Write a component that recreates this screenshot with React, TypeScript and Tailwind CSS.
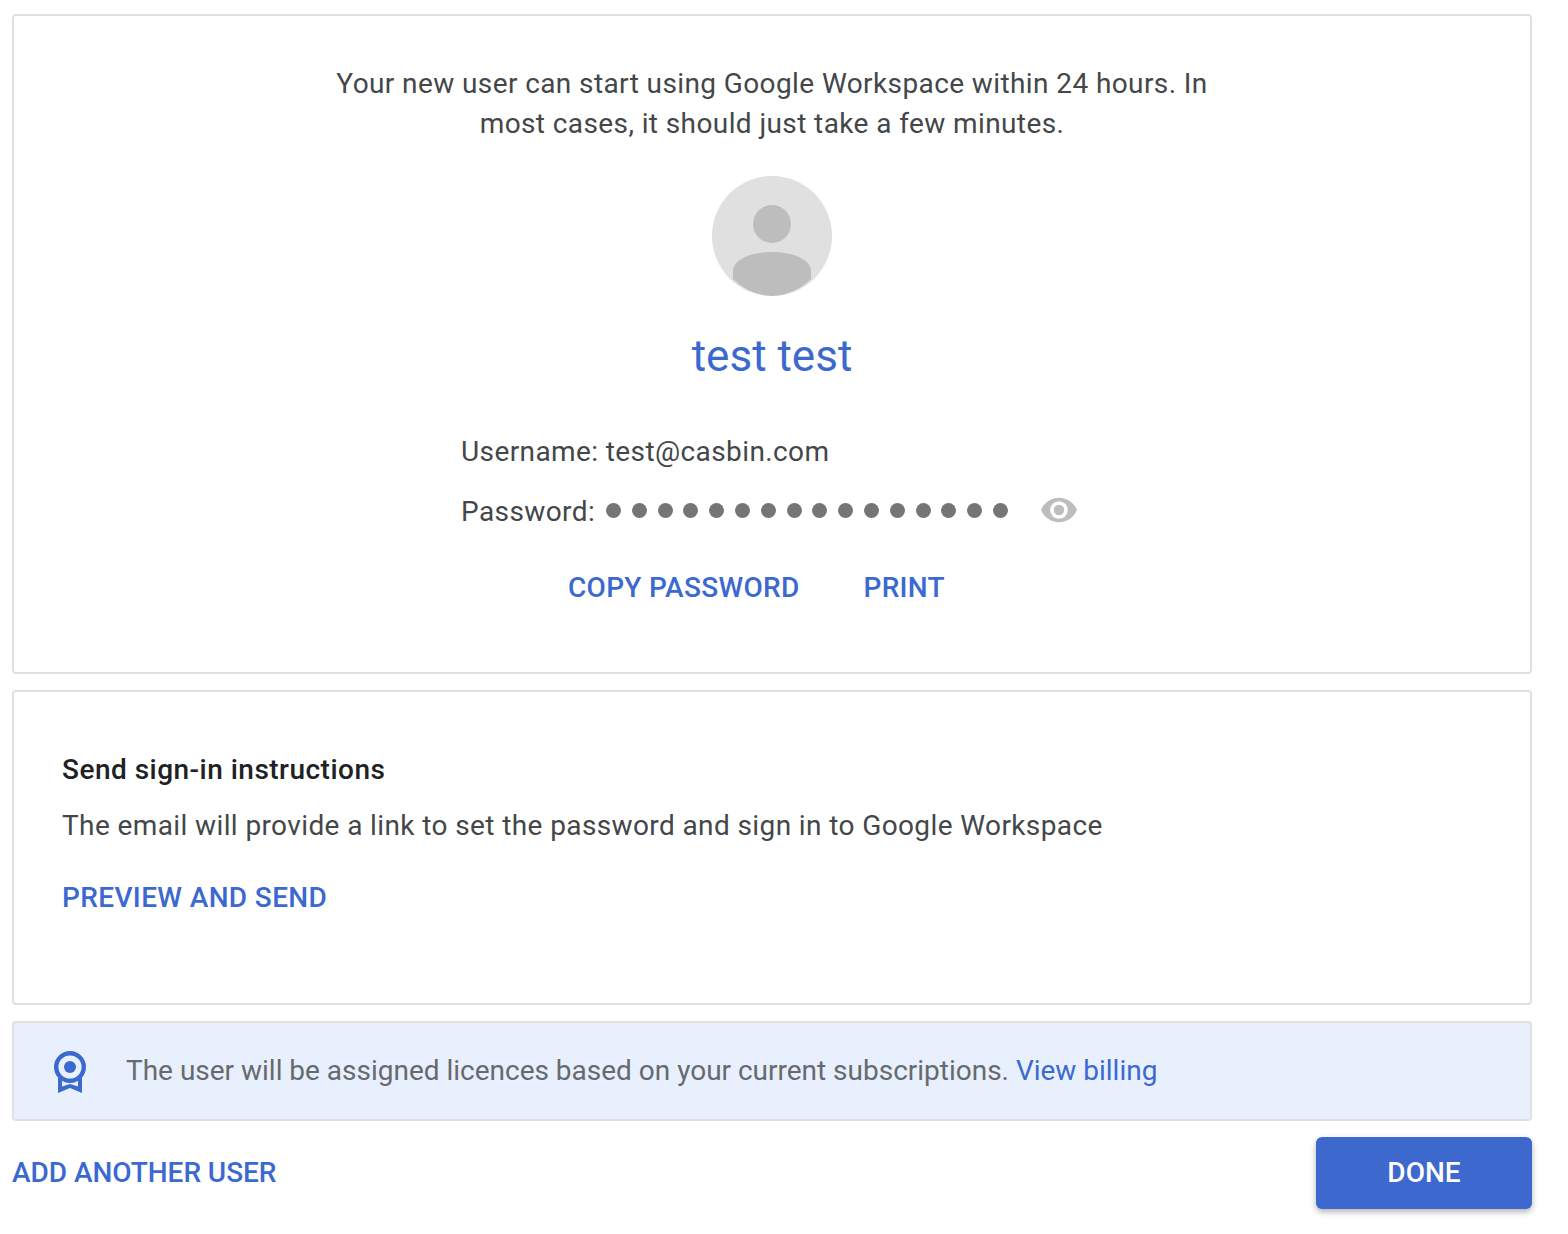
import React from 'react';

const font = "font-['Roboto',sans-serif]";

const App: React.FC = () => {
  const dots = Array.from({ length: 16 });

  return (
    <div className={`${font} w-[1568px] h-[1234px] bg-white pt-3.5 pl-3 pr-9 overflow-hidden`}>
      {/* User card */}
      <div className="h-[660px] border-2 border-[#e0e0e0] rounded flex flex-col items-center pt-[48px]">
        <p className="w-[900px] text-center text-[28px] leading-10 tracking-[0.4px] text-[#43474a]">
          Your new user can start using Google Workspace within 24 hours. In most cases, it should just take a few minutes.
        </p>
        <svg className="mt-[32px]" width="120" height="120" viewBox="0 0 120 120">
          <circle cx="60" cy="60" r="60" fill="#e0e0e0" />
          <circle cx="60" cy="48" r="19" fill="#bdbdbd" />
          <path d="M21 103 V95 C21 83 40 76 60 76 C80 76 99 83 99 95 V103 A60 60 0 0 1 60 120 A60 60 0 0 1 21 103 Z" fill="#bdbdbd" />
        </svg>
        <h1 className="mt-[32px] text-[44px] leading-[56px] text-[#3b69d0]">test test</h1>
        <div className="w-[640px] mt-[48px] pl-[9px] text-[28px] leading-10 tracking-[0.4px] text-[#43474a]">
          <div>Username: test@casbin.com</div>
          <div className="flex items-center mt-5 h-10">
            <span>Password:</span>
            <span className="flex gap-[10.8px] ml-[11px] mb-1">
              {dots.map((_, i) => (
                <span key={i} className="w-[15px] h-[15px] rounded-full bg-[#757575]" />
              ))}
            </span>
            <svg className="ml-[31px] mb-1" width="40" height="28" viewBox="-0.22 3.44 24.44 17.12">
              <path d="M12 4.5C7 4.5 2.73 7.61 1 12c1.73 4.39 6 7.5 11 7.5s9.27-3.11 11-7.5c-1.73-4.39-6-7.5-11-7.5z" fill="#bdbdbd" />
              <circle cx="12" cy="12" r="5.4" fill="#fff" />
              <circle cx="12" cy="12" r="3.2" fill="#bdbdbd" />
            </svg>
          </div>
        </div>
        <div className="flex gap-16 mt-9 mr-[31px] text-[28px] leading-10 font-medium tracking-[0.3px] text-[#3b69d0]">
          <span>COPY PASSWORD</span>
          <span>PRINT</span>
        </div>
      </div>

      {/* Sign-in instructions */}
      <div className="h-[315px] mt-4 border-2 border-[#e0e0e0] rounded pl-12 pt-[58px]">
        <h2 className="text-[28px] leading-10 font-medium tracking-[0.48px] text-[#202124]">Send sign-in instructions</h2>
        <p className="mt-4 text-[28px] leading-10 tracking-[0.39px] text-[#43474a]">
          The email will provide a link to set the password and sign in to Google Workspace
        </p>
        <div className="mt-8 text-[28px] leading-10 font-medium tracking-[0.37px] text-[#3b69d0]">PREVIEW AND SEND</div>
      </div>

      {/* Licence notice */}
      <div className="h-[100px] mt-4 border-2 border-[#e0e0e0] rounded bg-[#e8f0fd] flex items-center pl-10">
        <svg width="32" height="44" viewBox="0 0 32 44">
          <circle cx="16" cy="18" r="13.8" fill="none" stroke="#3b69d0" strokeWidth="4.4" />
          <circle cx="16" cy="18" r="6" fill="#3b69d0" />
          <path d="M4 28 V44 L16 39 L28 44 V28 H24 V37.5 L16 35 L8 37.5 V28 Z" fill="#3b69d0" />
        </svg>
        <p className="ml-10 text-[28px] leading-10 tracking-[-0.01px] text-[#666a6e]">
          The user will be assigned licences based on your current subscriptions.{' '}
          <span className="text-[#3b69d0]">View billing</span>
        </p>
      </div>

      {/* Footer actions */}
      <div className="flex items-center justify-between mt-4">
        <span className="text-[28px] leading-10 font-medium tracking-[-0.05px] text-[#3b69d0]">ADD ANOTHER USER</span>
        <button className="w-[216px] h-[72px] rounded-md bg-[#3d69cf] text-white text-[28px] font-medium shadow-[0_3px_6px_rgba(0,0,0,0.3)]">
          DONE
        </button>
      </div>
    </div>
  );
};

export default App;
